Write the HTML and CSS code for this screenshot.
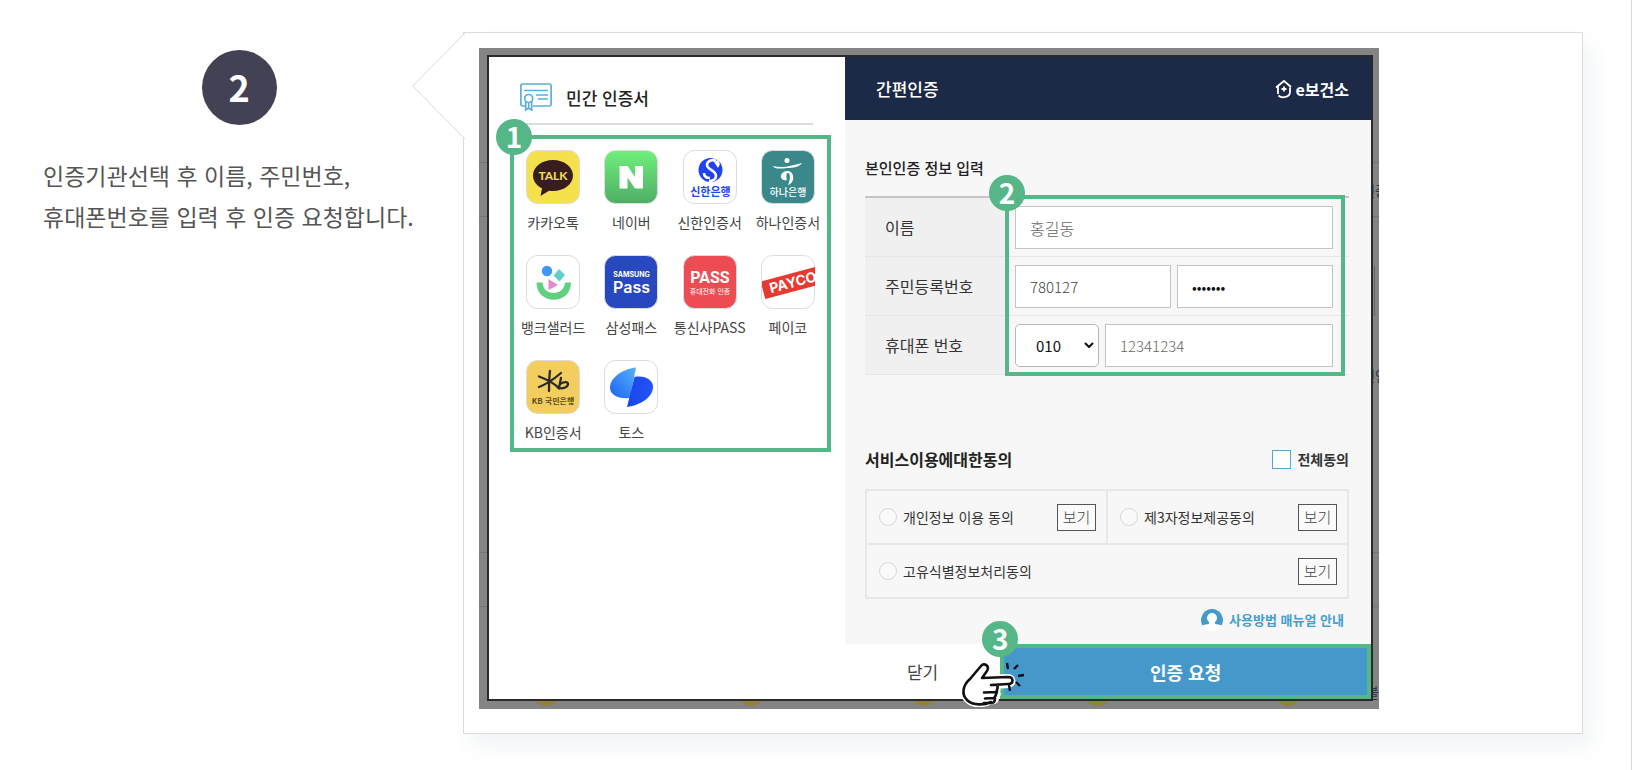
FILE: index.html
```html
<!DOCTYPE html>
<html lang="ko">
<head>
<meta charset="utf-8">
<meta name="viewport" content="width=device-width, initial-scale=1">
<title>간편인증 안내</title>
<link rel="stylesheet" href="styles.css">
</head>
<body>
<main class="page">
  <section class="step">
    <div class="step-info">
      <span class="step-number">2</span>
      <p class="step-text">인증기관선택 후 이름, 주민번호,<br>휴대폰번호를 입력 후 인증 요청합니다.</p>
    </div>

    <div class="card">
      <svg class="card-arrow" viewBox="0 0 54 108" aria-hidden="true"><path d="M53 1 .8 54 53 107" fill="#fff" stroke="#d8d8d8"/></svg>

      <div class="shot">
        <div class="backdrop" aria-hidden="true">
          <span class="rule rule-a"></span><span class="rule rule-b"></span><span class="rule rule-c"></span><span class="rule rule-d"></span>
          <span class="scroll-edge"></span>
          <span class="ghost ghost-a">인증</span><span class="ghost ghost-b">인인</span><span class="ghost ghost-c">불</span>
          <span class="coin coin-a"></span><span class="coin coin-b"></span><span class="coin coin-c"></span><span class="coin coin-d"></span><span class="coin coin-e"></span>
        </div>

        <div class="modal">
          <div class="providers">
            <h2 class="providers-title">
              <svg class="cert" viewBox="0 0 32 29" fill="none" stroke="#5aaed9" stroke-width="1.700" aria-hidden="true">
                <path d="M5 23H2.500A1.600 1.600 0 0 1 .9 21.500V2.600A1.600 1.600 0 0 1 2.500 1h27a1.600 1.600 0 0 1 1.600 1.600v18.900a1.600 1.600 0 0 1-1.600 1.500H13"/>
                <path d="M4 7.500h24M16 12h12M18 16h10"/>
                <circle cx="8.700" cy="15.500" r="4" fill="#fff"/>
                <path d="M5.700 18.500V27l3-2 3 2v-8.500M8.700 20v5"/>
              </svg>
              민간 인증서
            </h2>
            <div class="frame provider-frame">
              <span class="badge badge-first">1</span>
              <ul class="provider-list">
                <li><button class="provider" type="button">
                  <svg class="app" viewBox="0 0 54 54" aria-hidden="true"><rect x=".5" y=".5" width="53" height="53" rx="11" fill="#f5e14c" stroke="#dcdcdc"/><path d="M27 10c-11 0-20 6.800-20 15.500 0 5.500 3.500 10 9 12.800L14.500 46l8.500-5.300c1.300.2 2.600.3 4 .3 11 0 20-6.800 20-15.500S38 10 27 10Z" fill="#371d1e"/><text x="27" y="30" class="t-talk">TALK</text></svg>
                  카카오톡</button></li>
                <li><button class="provider" type="button">
                  <svg class="app" viewBox="0 0 54 54" aria-hidden="true"><defs><linearGradient id="nv" x2="0" y2="1"><stop stop-color="#6ff07a"/><stop offset="1" stop-color="#4fad66"/></linearGradient></defs><rect x=".5" y=".5" width="53" height="53" rx="11" fill="url(#nv)" stroke="#dcdcdc"/><path d="M15.500 16h8l7.500 11V16h8v22.500h-8l-7.500-11v11h-8Z" fill="#fff"/></svg>
                  네이버</button></li>
                <li><button class="provider" type="button">
                  <svg class="app" viewBox="0 0 54 54" aria-hidden="true"><rect x=".5" y=".5" width="53" height="53" rx="11" fill="#fff" stroke="#dcdcdc"/><circle cx="27.500" cy="20" r="12" fill="#1f43f0"/><path d="M33 11c-4-2-9 0-9 4 0 5 9 5 9 11 0 3-3 5-7 5M21 23c0 3 2 5 6 5" fill="none" stroke="#fff" stroke-width="2.600"/><path d="m31 12 4-2 2 4-2 4Z" fill="#fff"/><text x="27.500" y="46" class="t-shinhan">신한은행</text></svg>
                  신한인증서</button></li>
                <li><button class="provider" type="button">
                  <svg class="app" viewBox="0 0 54 54" aria-hidden="true"><rect x=".5" y=".5" width="53" height="53" rx="11" fill="#3b888b" stroke="#dcdcdc"/><circle cx="26" cy="10.500" r="2.500" fill="#fff"/><path d="M12 16c10 3 20-1 29-3-2 4-9 5-15 5-7 1-13 1-14-2Z" fill="#fff"/><path d="M20 25c2-5 11-6 12 1 1 5-2 8-5 9 2-4 3-12 0-12-2 0-2 4-1 7-3 1-7-1-6-5Z" fill="#fff"/><text x="27" y="46" class="t-hana">하나은행</text></svg>
                  하나인증서</button></li>
                <li><button class="provider" type="button">
                  <svg class="app" viewBox="0 0 54 54" aria-hidden="true"><rect x=".5" y=".5" width="53" height="53" rx="11" fill="#fff" stroke="#dcdcdc"/><circle cx="21" cy="16" r="5.200" fill="#3f97fa"/><path d="m33 14 6 6-5.500 6.500-6-6Z" fill="#5fcfcb"/><path d="M22.500 24v11l9.500-5Z" fill="#e58ac9"/><path d="M10.500 27.500c0 23 34.500 23 34.500 0h-6c-1 14-22 14-22.500 0Z" fill="#5fd07e"/></svg>
                  뱅크샐러드</button></li>
                <li><button class="provider" type="button">
                  <svg class="app" viewBox="0 0 54 54" aria-hidden="true"><rect x=".5" y=".5" width="53" height="53" rx="11" fill="#2748be" stroke="#dcdcdc"/><text x="27.500" y="22" class="t-samsung">SAMSUNG</text><text x="27.500" y="38" class="t-pass">Pass</text></svg>
                  삼성패스</button></li>
                <li><button class="provider" type="button">
                  <svg class="app" viewBox="0 0 54 54" aria-hidden="true"><rect x=".5" y=".5" width="53" height="53" rx="11" fill="#ed4d52" stroke="#dcdcdc"/><text x="27" y="28" class="t-telecom">PASS</text><text x="27" y="39" class="t-phone">휴대전화 인증</text></svg>
                  통신사PASS</button></li>
                <li><button class="provider" type="button">
                  <svg class="app" viewBox="0 0 54 54" aria-hidden="true"><clipPath id="pc"><rect x="1" y="1" width="53" height="52" rx="11"/></clipPath><rect x=".5" y=".5" width="53" height="53" rx="11" fill="#fff" stroke="#dcdcdc"/><g clip-path="url(#pc)"><g class="payco"><rect x="4" y="26" width="60" height="18" fill="#e6392f"/><text x="11" y="40" class="t-payco">PAYCO</text></g></g></svg>
                  페이코</button></li>
                <li><button class="provider" type="button">
                  <svg class="app" viewBox="0 0 54 54" aria-hidden="true"><rect x=".5" y=".5" width="53" height="53" rx="11" fill="#f3ce5e" stroke="#dcdcdc"/><path d="M24 11c-1 7-1 13-1 20M35 13C28 19 21 24 13 27M13 16.500c8 3 16 7 20 12M35 18l-2 10c4 1 9-1 9-4s-5-2-8 0" fill="none" stroke="#2b2b26" stroke-width="2.300" stroke-linecap="round"/><text x="27" y="44" class="t-kb">KB 국민은행</text></svg>
                  KB인증서</button></li>
                <li><button class="provider" type="button">
                  <svg class="app" viewBox="0 0 54 54" aria-hidden="true"><defs><linearGradient id="ta" x1="0" y1="1" x2="1" y2="0"><stop stop-color="#1e62f2"/><stop offset="1" stop-color="#55b4fb"/></linearGradient><linearGradient id="tb" x1="0" x2="1"><stop stop-color="#1746e8"/><stop offset="1" stop-color="#2453fb"/></linearGradient></defs><rect x=".5" y=".5" width="53" height="53" rx="11" fill="#fff" stroke="#dcdcdc"/><path d="M32 7.500C18 9 6 18 6 27.500 6 35 14 39 26 38Z" fill="url(#ta)"/><path d="M30.500 17C41 15 49 20 49 27c0 9-11 18-26 20Z" fill="url(#tb)"/></svg>
                  토스</button></li>
              </ul>
            </div>
          </div>

          <form class="auth">
            <header class="auth-head">
              <h2 class="auth-title">간편인증</h2>
              <span class="brand">
                <svg class="brand-mark" viewBox="0 0 17 20" fill="none" stroke="#fff" stroke-width="1.800" aria-hidden="true"><path d="M1 8.500 9 2l7 6M3 7.500v7.500M15 8.500v4.500c0 5-8 7-11.500 3.500"/><path d="M9 7.500v5M6.500 10h5"/></svg>
                e보건소
              </span>
            </header>

            <div class="auth-body">
              <h3 class="section-title">본인인증 정보 입력</h3>
              <div class="fields">
                <table class="field-table">
                  <tr><th scope="row"><label for="name">이름</label></th><td><div class="inputs"><input class="box muted name" id="name" type="text" value="홍길동"></div></td></tr>
                  <tr><th scope="row"><label for="rrn">주민등록번호</label></th><td><div class="inputs"><input class="box" id="rrn" type="text" value="780127"><input class="box" type="password" value="0000000" aria-label="주민등록번호 뒷자리"></div></td></tr>
                  <tr><th scope="row"><label for="phone">휴대폰 번호</label></th><td><div class="inputs">
                    <span class="select-wrap"><select class="prefix" aria-label="휴대폰 앞자리"><option>010</option></select><svg class="chevron" viewBox="0 0 10 6" aria-hidden="true"><path d="m1 1 4 4 4-4" fill="none" stroke="#111" stroke-width="2"/></svg></span>
                    <input class="box muted" id="phone" type="text" value="12341234"></div></td></tr>
                </table>
                <div class="frame field-frame"><span class="badge badge-second">2</span></div>
              </div>

              <div class="terms-head">
                <h3 class="section-title strong">서비스이용에대한동의</h3>
                <label class="agree-all"><input class="tick" type="checkbox">전체동의</label>
              </div>
              <div class="terms">
                <div class="term"><label class="term-label"><input class="dot" type="radio" name="t1">개인정보 이용 동의</label><button class="view" type="button">보기</button></div>
                <div class="term"><label class="term-label"><input class="dot" type="radio" name="t2">제3자정보제공동의</label><button class="view" type="button">보기</button></div>
                <div class="term wide"><label class="term-label"><input class="dot" type="radio" name="t3">고유식별정보처리동의</label><button class="view" type="button">보기</button></div>
              </div>
              <a class="manual" href="#">
                <svg class="person" viewBox="0 0 22 22" aria-hidden="true"><circle cx="11" cy="11" r="11" fill="#fff"/><path d="M1.500 16.500A11 11 0 1 1 20.500 16.500Q18 15 14 15H8Q4 15 1.500 16.500Z" fill="#449bcb"/><circle cx="11" cy="9" r="5" fill="#fff"/><path d="M8.500 12h5l1 4h-7Z" fill="#fff"/></svg>
                사용방법 매뉴얼 안내
              </a>
            </div>

            <footer class="actions">
              <button class="close" type="button">닫기</button>
              <button class="frame submit" type="button">인증 요청</button>
              <span class="badge badge-submit">3</span>
              <svg class="hand" viewBox="0 0 64 46" aria-hidden="true">
                <path d="M30 40C24 44 12 45 6 39 0 33 2 24 9 18L21 5c3-3 8 0 6 4l-5 8 25-1c6 0 6 8 0 8l-14 1c4 0 5 4 2 5 3 2 2 5-1 6 2 3 0 5-4 4Z" fill="#fff" stroke="#fff" stroke-width="6"/>
                <path d="M30 41C24 44 12 45 6 39 0 33 2 24 9 18L20 5c3-4 9 0 6 5l-5 7 26-1c6 0 6 7 0 7l-17 1h6M37 24c-1 3 0 5-2 7l-12 .5M36 31c-1 2-1 4-3 6l-9 .5M34 37c0 4-1 5-5 5l-6 0" fill="#fff" stroke="#111" stroke-width="2.600" stroke-linecap="round" stroke-linejoin="round"/>
                <path d="M46 2l1 6M57 4l-4 4M57 15l6-1M55 21l4 4M48 24l1 6" fill="none" stroke="#111" stroke-width="2.400"/>
              </svg>
            </footer>
          </form>
        </div>
      </div>
    </div>
  </section>
</main>
</body>
</html>
```

FILE: styles.css
```css
* { box-sizing: border-box; }

body {
  margin: 0;
  background: #fff;
  color: #333;
  font-family: "Noto Sans CJK KR", "Noto Sans", sans-serif;
  font-size: 14px;
}

h2, h3, p, ul { margin: 0; padding: 0; }
ul { list-style: none; }
button, input, select { font-family: inherit; color: inherit; margin: 0; }
button { cursor: pointer; }

.page {
  min-height: 100vh;
  padding: 32px 48px 36px 15px;
  border-right: 1px solid #d8d8d8;
}

.step { display: grid; grid-template-columns: 2fr 5fr; }

.step-info { display: flex; flex-direction: column; align-items: center; padding-top: 18px; }

.step-number {
  display: flex;
  align-items: center;
  justify-content: center;
  width: 75px;
  height: 75px;
  padding-bottom: 4px;
  border-radius: 50%;
  background: #434255;
  color: #fff;
  font-size: 36px;
  font-weight: 700;
  line-height: 1;
}

.step-text {
  align-self: stretch;
  margin-top: 30px;
  padding-left: 28px;
  color: #555;
  font-size: 23px;
  line-height: 41px;
}

.card {
  position: relative;
  padding: 15px 15px 24px;
  border: 1px solid #dcdcdc;
  background: #fff;
  box-shadow: 8px 12px 20px rgba(60, 80, 110, .07);
}

.card-arrow { position: absolute; left: -52px; top: -1px; width: 54px; height: 108px; }

/* Captured window */
.shot {
  position: relative;
  max-width: 900px;
  padding: 7px 6px 8px 8px;
  background: #848484;
}

.backdrop { position: absolute; inset: 0; overflow: hidden; }
.rule { position: absolute; left: 0; right: 0; height: 1px; background: #767676; }
.rule-a { top: 114px; }
.rule-b { top: 168px; }
.rule-c { top: 504px; }
.rule-d { top: 558px; }
.scroll-edge { position: absolute; right: 4px; top: 218px; width: 1px; height: 50px; background: #666; }
.ghost { position: absolute; right: -9px; color: #2c3040; font-size: 14px; line-height: 20px; white-space: nowrap; }
.ghost-a { top: 132px; }
.ghost-b { top: 317px; }
.ghost-c { top: 634px; right: 0; }
.coin { position: absolute; bottom: 3px; width: 26px; height: 26px; border-radius: 50%; background: #91803f; }
.coin-a { left: 54px; }
.coin-b { left: 259px; }
.coin-c { left: 432px; }
.coin-d { left: 606px; }
.coin-e { left: 796px; }

.modal {
  position: relative;
  display: grid;
  grid-template-columns: 356fr 526fr;
  min-height: 646px;
  border: 2px solid #2a2a2a;
  background: #fff;
}

.frame { border: 4px solid #55b687; }

.badge {
  position: absolute;
  display: flex;
  align-items: center;
  justify-content: center;
  width: 36px;
  height: 36px;
  padding-bottom: 2px;
  border-radius: 50%;
  background: #55b687;
  color: #fff;
  font-size: 28px;
  font-weight: 700;
  line-height: 1;
}
.badge-first { left: -18px; top: -20px; }
.badge-second { left: -20px; top: -24px; }

/* Certificate providers */
.providers { padding: 0 14px 0 21px; }

.providers-title {
  display: flex;
  align-items: center;
  gap: 14px;
  height: 68px;
  margin-right: 18px;
  padding: 14px 0 0 10px;
  border-bottom: 2px solid #dcdcdc;
  color: #222;
  font-size: 17px;
  font-weight: 500;
}
.cert { width: 32px; height: 29px; }

.provider-frame { position: relative; margin-top: 10px; padding: 11px 0 6px; }
.provider-list { display: grid; grid-template-columns: repeat(4, 1fr); row-gap: 23px; }

.provider {
  display: flex;
  flex-direction: column;
  align-items: center;
  gap: 8px;
  width: 100%;
  padding: 0;
  border: 0;
  background: none;
  color: #444;
  font-size: 14px;
  line-height: 20px;
  white-space: nowrap;
}
.app { width: 54px; height: 54px; }
.app text { text-anchor: middle; font-weight: 700; fill: #fff; }
.app .t-talk { font-family: Lato, sans-serif; font-size: 12px; fill: #f5e14c; }
.app .t-shinhan { font-size: 11px; fill: #1f43f0; }
.app .t-hana { font-size: 10px; font-weight: 500; }
.app .t-samsung { font-family: Inter, sans-serif; font-size: 7px; }
.app .t-pass { font-family: Inter, sans-serif; font-size: 16px; font-weight: 600; }
.app .t-telecom { font-family: Roboto, sans-serif; font-size: 16px; }
.app .t-phone { font-size: 7px; font-weight: 400; }
.app .t-payco { font-family: Inter, sans-serif; font-size: 14px; text-anchor: start; }
.app .t-kb { font-size: 8px; fill: #5a4c20; }
.payco { transform: rotate(-15deg); transform-origin: 4px 43px; }

/* Authentication form */
.auth { display: flex; flex-direction: column; background: #f7f7f7; }

.auth-head {
  display: flex;
  align-items: center;
  justify-content: space-between;
  height: 63px;
  padding: 0 22px 0 31px;
  background: #1c2947;
  color: #fff;
}
.auth-title { font-size: 17px; font-weight: 500; }
.brand { display: flex; align-items: center; gap: 4px; font-size: 16px; font-weight: 700; }
.brand-mark { width: 17px; height: 20px; }

.auth-body { flex: 1; display: flex; flex-direction: column; padding: 36px 22px 12px 20px; }

.section-title { color: #222; font-size: 15px; font-weight: 500; line-height: 24px; }
.strong { font-size: 16px; font-weight: 700; }

.fields { position: relative; margin-top: 16px; }
.field-table { width: 100%; border-collapse: separate; border-spacing: 0; border-top: 2px solid #c6c6c6; }
.field-table th {
  width: 141px;
  padding: 0 0 0 20px;
  border-bottom: 1px solid #e6e6e6;
  background: #f0f0f0;
  font-size: 16px;
  font-weight: 400;
  text-align: left;
}
.field-table td { padding: 8px 16px 7px 9px; border-bottom: 1px solid #e6e6e6; }
.inputs { display: flex; gap: 6px; }

.box {
  flex: 1;
  min-width: 0;
  width: 100%;
  height: 43px;
  padding: 0 14px;
  border: 1px solid #c4c4c4;
  border-radius: 0;
  background: #fff;
  color: #444;
  font-size: 15px;
  font-weight: 300;
}
.muted { color: #666; }
.name { font-size: 16px; }
.box[type="password"] { color: #111; }

.select-wrap { position: relative; width: 84px; }
.prefix {
  appearance: none;
  width: 100%;
  height: 43px;
  padding: 0 20px;
  border: 1px solid #b8b8b8;
  border-radius: 5px;
  background: #fff;
  color: #111;
  font-size: 15px;
}
.chevron { position: absolute; right: 5px; top: 18px; width: 10px; height: 6px; }

.field-frame { position: absolute; inset: -1px 4px -1px 140px; pointer-events: none; }

.terms-head { display: flex; justify-content: space-between; align-items: center; margin-top: 72px; }
.agree-all { display: flex; align-items: center; gap: 6px; color: #333; font-size: 14px; font-weight: 700; line-height: 24px; }
.tick { appearance: none; width: 19px; height: 19px; border: 1px solid #4fa8d8; background: #fff; }

.terms { display: grid; grid-template-columns: 1fr 1fr; gap: 2px; margin-top: 18px; border: 2px solid #e8e8e8; background: #e8e8e8; }
.term { display: flex; align-items: center; justify-content: space-between; min-height: 52px; padding: 0 10px 0 12px; background: #f7f7f7; }
.wide { grid-column: 1 / -1; }
.term-label { display: flex; align-items: center; gap: 6px; font-size: 14px; }
.dot { appearance: none; width: 18px; height: 18px; border: 1px solid #d8d8d8; border-radius: 50%; background: #f9f9f9; }
.view { width: 39px; height: 27px; padding: 0; border: 1px solid #555; background: #fafafa; color: #444; font-size: 15px; font-weight: 300; line-height: 24px; }

.manual {
  display: flex;
  align-items: center;
  gap: 6px;
  align-self: flex-end;
  margin: 10px 5px 0 0;
  color: #429fcf;
  font-size: 13px;
  font-weight: 700;
  line-height: 22px;
  text-decoration: none;
}
.person { width: 22px; height: 22px; }

.actions { position: relative; display: flex; height: 55px; }
.close { flex: 0 0 29.5%; border: 0; background: #fff; color: #444; font-size: 17px; }
.submit { flex: 1; padding: 0; background: #4499ca; color: #fff; font-size: 18px; font-weight: 700; }
.badge-submit { left: 29.5%; top: -23px; margin-left: -18px; }
.hand { position: absolute; left: 22%; top: 17px; width: 64px; height: 46px; }
```
